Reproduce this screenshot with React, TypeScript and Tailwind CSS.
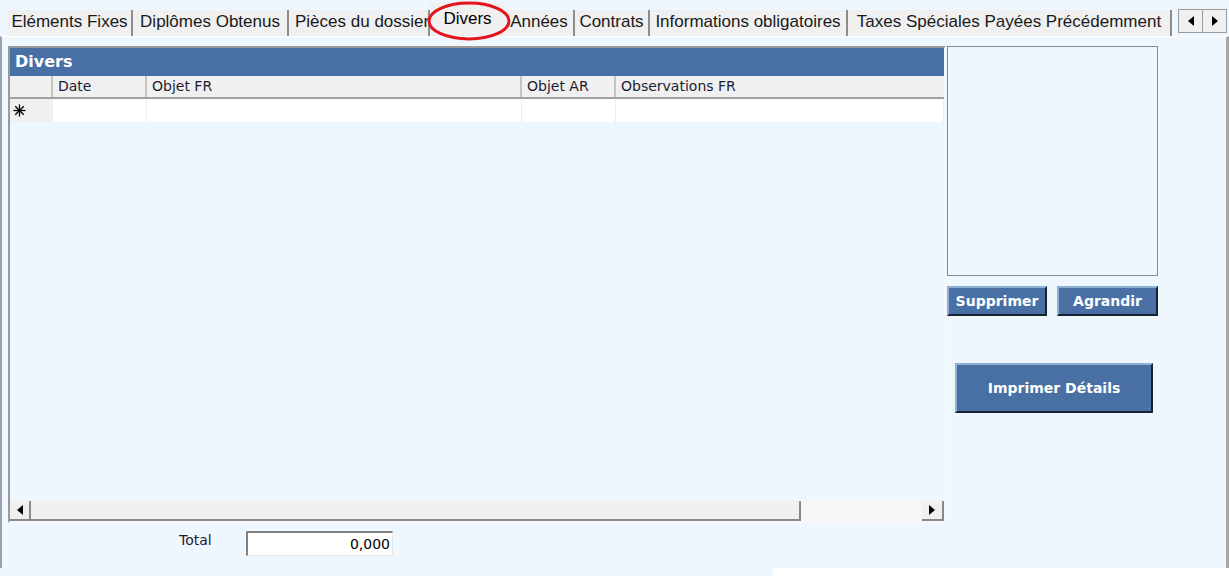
const tabs = [
  { label: "Eléments Fixes", w: 125 },
  { label: "Diplômes Obtenus", w: 156 },
  { label: "Pièces du dossier", w: 141, clip: true },
  { label: "Divers", w: 75, active: true },
  { label: "Années", w: 70 },
  { label: "Contrats", w: 75 },
  { label: "Informations obligatoires", w: 198 },
  { label: "Taxes Spéciales Payées Précédemment", w: 324 },
];

const columns = [
  { label: "", w: 43 },
  { label: "Date", w: 94 },
  { label: "Objet FR", w: 375 },
  { label: "Objet AR", w: 94 },
  { label: "Observations FR", w: 0 },
];

function Arrow({ dir }: { dir: "left" | "right" }) {
  return (
    <svg width="6" height="10" viewBox="0 0 6 10">
      {dir === "left" ? <path d="M6 0 L0 5 L6 10 Z" fill="#000" /> : <path d="M0 0 L6 5 L0 10 Z" fill="#000" />}
    </svg>
  );
}

function NewRowMark() {
  return (
    <svg width="13" height="13" viewBox="0 0 13 13" stroke="#000" strokeWidth="1.3">
      <line x1="6.5" y1="0.5" x2="6.5" y2="12.5" />
      <line x1="0.5" y1="6.5" x2="12.5" y2="6.5" />
      <line x1="2.2" y1="2.2" x2="10.8" y2="10.8" />
      <line x1="10.8" y1="2.2" x2="2.2" y2="10.8" />
    </svg>
  );
}

function BlueButton({ label, className }: { label: string; className: string }) {
  return (
    <button
      className={`flex items-center justify-center border-2 border-t-[#8fb0d6] border-l-[#8fb0d6] border-b-[#1a2232] border-r-[#1a2232] bg-[#4870a4] text-[14px] font-bold text-white ${className}`}
    >
      {label}
    </button>
  );
}

export default function App() {
  return (
    <div
      className="relative flex h-[576px] w-[1229px] flex-col overflow-hidden bg-[#eef6fe]"
      style={{ fontFamily: '"DejaVu Sans", Verdana, sans-serif' }}
    >
      {/* tab strip */}
      <div className="flex h-[36px] items-end pl-[8px]" style={{ fontFamily: '"Liberation Sans", Arial, sans-serif' }}>
        {tabs.map((t) =>
          t.active ? (
            <div
              key={t.label}
              className="flex h-[33px] items-start justify-center bg-[#f0f0f0] pt-[7px] text-[17px] leading-none text-black"
              style={{ width: t.w }}
            >
              {t.label}
            </div>
          ) : (
            <div
              key={t.label}
              className={`flex h-[26px] items-center overflow-hidden whitespace-nowrap border-r-2 border-r-[#8c8c8c] bg-[#f0f0f0] pb-[2px] text-[17px] text-[#1a1a1a] ${t.clip ? "border-r-0 pl-[6px]" : "justify-center"}`}
              style={{ width: t.w }}
            >
              {t.label}
            </div>
          )
        )}
        <div className="ml-[6px] mb-[3px] flex h-[24px] w-[49px] border border-[#9a9a9a] bg-[#f0f0f0]">
          <div className="flex flex-1 items-center justify-center border-r border-[#9a9a9a]">
            <Arrow dir="left" />
          </div>
          <div className="flex flex-1 items-center justify-center">
            <Arrow dir="right" />
          </div>
        </div>
      </div>

      {/* panel */}
      <div className="flex h-[532px] border-l-2 border-r-[3px] border-t border-l-[#9aa3ad] border-r-[#a8a8a8] border-t-white pl-[6px] pt-[9px]">
        <div className="flex w-[938px] flex-col">
          <div className="flex h-[477px] flex-col border-2 border-t-[#9a9a9a] border-l-[#9a9a9a] border-b-[#f4f8fc] border-r-[#f4f8fc]">
            <div className="flex h-[28px] items-center bg-[#4870a4] pl-[5px] text-[16px] font-bold text-white">Divers</div>
            <div className="flex h-[23px] border-b-2 border-[#a0a0a0] bg-[#f0f0f0] text-[14px] text-[#1c1c30]">
              {columns.map((c, i) => (
                <div
                  key={i}
                  className={`flex items-center pl-[5px] ${c.w ? "border-r-2 border-r-[#c4c4c4]" : "flex-1"}`}
                  style={c.w ? { width: c.w } : undefined}
                >
                  {c.label}
                </div>
              ))}
            </div>
            <div className="flex h-[23px] text-[14px]">
              {columns.map((c, i) => (
                <div
                  key={i}
                  className={`flex items-center ${i === 0 ? "bg-[#f0f0f0] pl-[3px]" : "border-r border-r-[#ececec] bg-white"} ${c.w ? "" : "flex-1"}`}
                  style={c.w ? { width: c.w } : undefined}
                >
                  {i === 0 ? <NewRowMark /> : null}
                </div>
              ))}
            </div>
            <div className="flex-1" />
            {/* horizontal scrollbar */}
            <div className="flex h-[20px] bg-[#f4f4f4]">
              <div className="flex w-[21px] items-center justify-center border-r-2 border-b-2 border-[#8a8a8a] bg-[#f0f0f0]">
                <Arrow dir="left" />
              </div>
              <div className="w-[770px] border-r-2 border-b-2 border-[#8a8a8a] bg-[#f0f0f0]" />
              <div className="flex-1 bg-[#f6f6f6]" />
              <div className="flex w-[22px] items-center justify-center border-r-2 border-b-2 border-[#8a8a8a] bg-[#f0f0f0]">
                <Arrow dir="right" />
              </div>
            </div>
          </div>
          <div className="mt-[8px] flex items-center">
            <span className="ml-[171px] -mt-[6px] w-[67px] text-[14px] text-[#1c1c30]">Total</span>
            <div className="flex h-[25px] w-[147px] items-center justify-end border border-t-2 border-l-2 border-t-[#808080] border-l-[#808080] border-r-[#e6e6e6] border-b-[#e6e6e6] bg-white pr-[2px] text-[14px] text-black">
              0,000
            </div>
          </div>
        </div>

        <div className="ml-[1px] flex flex-col">
          <div className="h-[230px] w-[211px] border border-[#8a8a8a]" />
          <div className="mt-[10px] flex">
            <BlueButton label="Supprimer" className="h-[30px] w-[100px]" />
            <BlueButton label="Agrandir" className="ml-[10px] h-[30px] w-[101px]" />
          </div>
          <BlueButton label="Imprimer Détails" className="ml-[8px] mt-[47px] h-[50px] w-[198px]" />
        </div>
      </div>

      <div className="flex h-[8px]">
        <div className="flex-1" />
        <div className="w-[456px] bg-white" />
      </div>

      {/* red annotation ellipse */}
      <svg className="pointer-events-none absolute left-[426px] top-0" width="86" height="42" viewBox="0 0 86 42">
        <ellipse cx="43" cy="21" rx="40" ry="18" fill="none" stroke="#e3141b" strokeWidth="3" />
      </svg>
    </div>
  );
}
